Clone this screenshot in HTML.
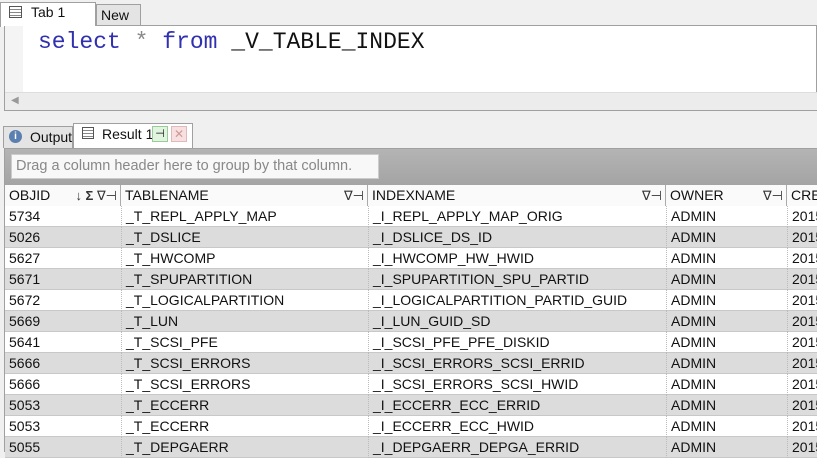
<!DOCTYPE html>
<html><head><style>
*{margin:0;padding:0;box-sizing:border-box}
body{width:817px;height:452px;overflow:hidden;background:#f0f0f0;font-family:"Liberation Sans",sans-serif;font-size:14px;color:#111;position:relative}
.a{position:absolute}
.row{position:absolute;left:5px;width:812px;height:21px;border-bottom:1px solid #c8c8c8}
.row div,.hdr div{position:absolute;top:0;height:21px;line-height:21px;padding-left:4px;white-space:nowrap;overflow:hidden}
.c1{left:0;width:116px}.c2{left:116px;width:247px;border-left:1px dotted #bbb}.c3{left:363px;width:298px;border-left:1px dotted #bbb}.c4{left:661px;width:121px;border-left:1px dotted #bbb}.c5{left:782px;width:40px;border-left:1px dotted #bbb}
.hdr div{border-right:1px solid #aaa;border-left:none!important}
.ic{position:absolute;right:3px;top:0;font-size:13px;color:#333}
</style></head><body>
<div class="a" style="left:0;top:0;width:817px;height:26px;background:#f0f0f0;border-bottom:1px solid #a0a0a0"></div>
<div class="a" style="left:0;top:2px;width:96px;height:25px;background:#fff;border:1px solid #a0a0a0;border-bottom:none"></div>
<div class="a" style="left:9px;top:6px;width:13px;height:12px;border:1px solid #555;background:repeating-linear-gradient(#fff 0 2px,#888 2px 3px)"></div>
<div class="a" style="left:31px;top:4px;font-size:14px">Tab 1</div>
<div class="a" style="left:96px;top:4px;width:45px;height:21px;background:#e4e4e4;border:1px solid #a0a0a0;border-bottom:none"></div>
<div class="a" style="left:101px;top:7px;font-size:14px">New</div>
<div class="a" style="left:4px;top:26px;width:813px;height:85px;background:#fff;border:1px solid #a0a0a0;border-top:none"></div>
<div class="a" style="left:5px;top:26px;width:18px;height:66px;background:#f4f4f4"></div>
<div class="a" style="left:38px;top:29px;font-family:'Liberation Mono',monospace;font-size:23px;white-space:pre;color:#111"><span style="color:#3030b0">select</span> <span style="color:#888">*</span> <span style="color:#3030b0">from</span> _V_TABLE_INDEX</div>
<div class="a" style="left:5px;top:92px;width:812px;height:18px;background:#ececec;border-top:1px solid #ddd"></div>
<div class="a" style="left:11px;top:95px;font-size:10px;color:#999">◀</div>
<div class="a" style="left:3px;top:126px;width:70px;height:22px;background:#e4e4e4;border:1px solid #a0a0a0;border-bottom:none"></div>
<div class="a" style="left:9px;top:130px;width:13px;height:13px;border-radius:50%;background:#5a7fb0;color:#fff;font-size:10px;line-height:13px;text-align:center;font-weight:bold">i</div>
<div class="a" style="left:30px;top:129px">Output</div>
<div class="a" style="left:73px;top:123px;width:120px;height:26px;background:#fff;border:1px solid #a0a0a0;border-bottom:none"></div>
<div class="a" style="left:82px;top:127px;width:12px;height:12px;border:1px solid #555;background:repeating-linear-gradient(#fff 0 2px,#888 2px 3px)"></div>
<div class="a" style="left:102px;top:126px">Result 1</div>
<div class="a" style="left:152px;top:126px;width:16px;height:16px;background:#e0f4e0;border:1px solid #9c9;font-size:11px;text-align:center;line-height:14px">⊣</div>
<div class="a" style="left:171px;top:126px;width:16px;height:16px;background:#f8e0e0;border:1px solid #dbb;color:#c99;font-size:12px;text-align:center;line-height:14px">✕</div>
<div class="a" style="left:4px;top:148px;width:813px;height:304px;background:#fff;border:1px solid #a0a0a0"></div>
<div class="a" style="left:5px;top:149px;width:812px;height:36px;background:linear-gradient(#b4b4b4,#a4a4a4)"></div>
<div class="a" style="left:11px;top:154px;width:368px;height:25px;background:#f8f8f8;border:1px solid #ccc;color:#888;padding-left:4px;line-height:23px;font-size:14.5px">Drag a column header here to group by that column.</div>
<div class="hdr a" style="left:5px;top:185px;width:812px;height:22px;background:#fafafa;border-bottom:1px solid #999">
<div class="c1">OBJID<span class="ic"><b>↓ Σ</b> ∇⊣</span></div>
<div class="c2">TABLENAME<span class="ic">∇⊣</span></div>
<div class="c3">INDEXNAME<span class="ic">∇⊣</span></div>
<div class="c4">OWNER<span class="ic">∇⊣</span></div>
<div class="c5">CREATED</div>
</div>
<div class="row" style="top:206px;background:#fff"><div class="c1">5734</div><div class="c2">_T_REPL_APPLY_MAP</div><div class="c3">_I_REPL_APPLY_MAP_ORIG</div><div class="c4">ADMIN</div><div class="c5">2015</div></div>
<div class="row" style="top:227px;background:#dcdcdc"><div class="c1">5026</div><div class="c2">_T_DSLICE</div><div class="c3">_I_DSLICE_DS_ID</div><div class="c4">ADMIN</div><div class="c5">2015</div></div>
<div class="row" style="top:248px;background:#fff"><div class="c1">5627</div><div class="c2">_T_HWCOMP</div><div class="c3">_I_HWCOMP_HW_HWID</div><div class="c4">ADMIN</div><div class="c5">2015</div></div>
<div class="row" style="top:269px;background:#dcdcdc"><div class="c1">5671</div><div class="c2">_T_SPUPARTITION</div><div class="c3">_I_SPUPARTITION_SPU_PARTID</div><div class="c4">ADMIN</div><div class="c5">2015</div></div>
<div class="row" style="top:290px;background:#fff"><div class="c1">5672</div><div class="c2">_T_LOGICALPARTITION</div><div class="c3">_I_LOGICALPARTITION_PARTID_GUID</div><div class="c4">ADMIN</div><div class="c5">2015</div></div>
<div class="row" style="top:311px;background:#dcdcdc"><div class="c1">5669</div><div class="c2">_T_LUN</div><div class="c3">_I_LUN_GUID_SD</div><div class="c4">ADMIN</div><div class="c5">2015</div></div>
<div class="row" style="top:332px;background:#fff"><div class="c1">5641</div><div class="c2">_T_SCSI_PFE</div><div class="c3">_I_SCSI_PFE_PFE_DISKID</div><div class="c4">ADMIN</div><div class="c5">2015</div></div>
<div class="row" style="top:353px;background:#dcdcdc"><div class="c1">5666</div><div class="c2">_T_SCSI_ERRORS</div><div class="c3">_I_SCSI_ERRORS_SCSI_ERRID</div><div class="c4">ADMIN</div><div class="c5">2015</div></div>
<div class="row" style="top:374px;background:#fff"><div class="c1">5666</div><div class="c2">_T_SCSI_ERRORS</div><div class="c3">_I_SCSI_ERRORS_SCSI_HWID</div><div class="c4">ADMIN</div><div class="c5">2015</div></div>
<div class="row" style="top:395px;background:#dcdcdc"><div class="c1">5053</div><div class="c2">_T_ECCERR</div><div class="c3">_I_ECCERR_ECC_ERRID</div><div class="c4">ADMIN</div><div class="c5">2015</div></div>
<div class="row" style="top:416px;background:#fff"><div class="c1">5053</div><div class="c2">_T_ECCERR</div><div class="c3">_I_ECCERR_ECC_HWID</div><div class="c4">ADMIN</div><div class="c5">2015</div></div>
<div class="row" style="top:437px;background:#dcdcdc"><div class="c1">5055</div><div class="c2">_T_DEPGAERR</div><div class="c3">_I_DEPGAERR_DEPGA_ERRID</div><div class="c4">ADMIN</div><div class="c5">2015</div></div>
</body></html>
